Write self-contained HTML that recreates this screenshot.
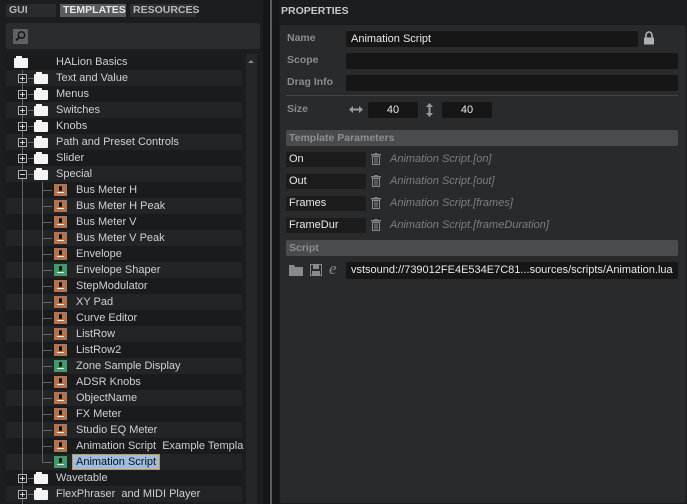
<!DOCTYPE html><html><head><style>
*{margin:0;padding:0;box-sizing:border-box}
body{width:687px;height:504px;overflow:hidden;background:#1c1d1e;font-family:"Liberation Sans",sans-serif;font-size:11px;color:#d0d0d0;position:relative}
.a{position:absolute}
.tab{position:absolute;top:4px;height:13px;font-size:10.5px;font-weight:bold;line-height:13px;padding-left:3px;color:#b8b8b8;background:#2e2f30}
.row{position:absolute;left:6px;width:236px;height:16px;line-height:16px;white-space:nowrap}
.row.o{background:#232425}.row.e{background:#1a1b1c}
.fold{position:absolute;width:14px;height:10px;background:#f4f4f4;top:4px;border-radius:1px}
.fold:before{content:"";position:absolute;left:2px;top:-2px;width:6px;height:2px;background:#f4f4f4}
.exp{position:absolute;width:9px;height:9px;border:1px solid #b0b0b0;top:4px;left:12px;background:#1c1c1c;z-index:2}
.exp:before{content:"";position:absolute;left:1px;top:3px;width:5px;height:1px;background:#ddd}
.exp.p:after{content:"";position:absolute;left:3px;top:1px;width:1px;height:5px;background:#ddd}
.ic{position:absolute;left:48px;top:2px;width:13px;height:12px;background:#b4734a}
.ic.g{background:#3f9b6c}
.ic:before{content:"";position:absolute;left:5px;top:2px;width:3px;height:5px;background:#111;border-radius:1px}
.ic:after{content:"";position:absolute;left:3px;top:8px;width:7px;height:1px;background:#eee}
.t1{position:absolute;left:50px}.t2{position:absolute;left:70px}
.hl{position:absolute;left:22px;width:14px;height:1px;background:#666;top:8px}
.vl{z-index:1}
.lbl{position:absolute;left:287px;color:#8c8c8c;font-weight:bold;font-size:10.5px}
.box{position:absolute;background:#161616;border-radius:2px;height:16px;line-height:16px;padding-left:5px;color:#e8e8e8}
.hdr{position:absolute;left:286px;width:392px;height:16px;background:#4a4b4c;border-radius:2px;color:#8e8e8e;font-weight:bold;font-size:10.5px;line-height:16px;padding-left:3px}
.pbox{position:absolute;left:286px;width:80px;height:15px;background:#1c1c1c;line-height:15px;padding-left:3px;color:#e8e8e8}
.it{position:absolute;left:390px;font-style:italic;color:#7e7e7e}
.tr{position:absolute;left:371px;width:10px;height:12px}
</style></head><body>
<div class="tab" style="left:6px;width:50px;background:#2a2b2c">GUI</div>
<div class="tab" style="left:60px;width:66px;background:#5a5b5c;color:#e8e8e8">TEMPLATES</div>
<div class="tab" style="left:130px;width:66px">RESOURCES</div>
<div class="a" style="left:6px;top:23px;width:254px;height:26px;background:#2b2c2d;border-radius:2px"></div>
<div class="a" style="left:13px;top:29px;width:15px;height:15px;background:#606162;border-radius:1px"><svg width="15" height="15"><circle cx="8.5" cy="6" r="3.2" fill="none" stroke="#111" stroke-width="1.3"/><line x1="6" y1="8.5" x2="3" y2="11.5" stroke="#111" stroke-width="1.6"/></svg></div>
<div class="a" style="left:246px;top:54px;width:11px;height:450px;background:#252627"></div>
<div class="a" style="left:248px;top:60px;width:0;height:0;border-left:3px solid transparent;border-right:3px solid transparent;border-bottom:3px solid #888"></div>
<div class="a" style="left:263px;top:0;width:7px;height:504px;background:#151617"></div>
<div class="a" style="left:270px;top:0;width:2px;height:504px;background:#5c5c5c"></div>
<div class="a" style="left:272px;top:0;width:7px;height:504px;background:#151617"></div>
<div id="tree"></div>
<div class="a vl" style="left:22px;top:70px;width:1px;height:434px;background:#666"></div>
<div class="a vl" style="left:42px;top:182px;width:1px;height:280px;background:#666"></div>
<div class="a" style="left:281px;top:5px;font-size:10.5px;font-weight:bold;color:#c8c8c8">PROPERTIES</div>
<div class="a" style="left:279px;top:24px;width:408px;height:480px;background:#292a2b;border:1px solid #1a1a1a;border-radius:3px"></div>
<div class="lbl" style="top:32px">Name</div><div class="box" style="left:346px;top:31px;width:292px">Animation Script</div>
<svg class="a" style="left:643px;top:31px" width="12" height="14"><path d="M3 7V4a3 3 0 0 1 6 0v3" fill="none" stroke="#b0b0b0" stroke-width="1.6"/><rect x="1" y="6.5" width="10" height="7" fill="#b0b0b0"/></svg>
<div class="lbl" style="top:54px">Scope</div><div class="box" style="left:346px;top:53px;width:332px"></div>
<div class="lbl" style="top:76px">Drag Info</div><div class="box" style="left:346px;top:75px;width:332px"></div>
<div class="a" style="left:286px;top:95px;width:392px;height:1px;background:#444"></div>
<div class="lbl" style="top:103px">Size</div>
<svg class="a" style="left:349px;top:105px" width="14" height="9"><path d="M0 4.5L4 1v7zM14 4.5L10 1v7z" fill="#9a9a9a"/><rect x="3" y="3.5" width="8" height="2" fill="#9a9a9a"/></svg>
<div class="box" style="left:368px;top:102px;width:50px;text-align:center;padding:0">40</div>
<svg class="a" style="left:425px;top:103px" width="9" height="14"><path d="M4.5 0L1 4h7zM4.5 14L1 10h7z" fill="#9a9a9a"/><rect x="3.5" y="3" width="2" height="8" fill="#9a9a9a"/></svg>
<div class="box" style="left:442px;top:102px;width:50px;text-align:center;padding:0">40</div>
<div class="hdr" style="top:130px">Template Parameters</div>
<div id="params"></div>
<div class="hdr" style="top:240px">Script</div>
<svg class="a" style="left:289px;top:264px" width="14" height="12"><path d="M0 1h5l1 2h8v9H0z" fill="#8a8a8a"/></svg>
<svg class="a" style="left:310px;top:264px" width="12" height="12"><rect x="0.5" y="0.5" width="11" height="11" fill="none" stroke="#8a8a8a"/><rect x="3" y="1" width="6" height="4" fill="#8a8a8a"/><rect x="2" y="7" width="8" height="4" fill="#8a8a8a"/></svg>
<div class="a" style="left:329px;top:259px;font-family:'Liberation Serif',serif;font-style:italic;font-size:17px;color:#8a8a8a">e</div>
<div class="box" style="left:346px;top:262px;width:332px;height:17px;line-height:17px">vstsound://739012FE4E534E7C81...sources/scripts/Animation.lua</div>
<script>
var rows=[[0,'HALion Basics'],[1,'Text and Value'],[1,'Menus'],[1,'Switches'],[1,'Knobs'],[1,'Path and Preset Controls'],[1,'Slider'],[2,'Special'],
[3,'Bus Meter H'],[3,'Bus Meter H Peak'],[3,'Bus Meter V'],[3,'Bus Meter V Peak'],[3,'Envelope'],[4,'Envelope Shaper'],[3,'StepModulator'],[3,'XY Pad'],[3,'Curve Editor'],[3,'ListRow'],[3,'ListRow2'],[4,'Zone Sample Display'],[3,'ADSR Knobs'],[3,'ObjectName'],[3,'FX Meter'],[3,'Studio EQ Meter'],[3,'Animation Script\u00a0 Example Templa'],[5,'Animation Script'],[1,'Wavetable'],[1,'FlexPhraser\u00a0 and MIDI Player']];
var h='';rows.forEach(function(r,i){var y=54+i*16,k=r[0];h+='<div class="row '+(i%2?'o':'e')+'" style="top:'+y+'px">';
if(k==0)h+='<div class="fold" style="left:8px"></div><span class="t1">'+r[1]+'</span>';
else if(k<=2)h+='<div class="hl" style="width:8px"></div><div class="exp'+(k==1?' p':'')+'"></div><div class="fold" style="left:28px"></div><span class="t1">'+r[1]+'</span>';
else h+='<div class="hl" style="left:36px;width:10px"></div><div class="ic'+(k>=4?' g':'')+'"></div>'+(k==5?'<span class="t2" style="left:66px;top:0;height:16px;padding:0 3px;background:#9bbde3;border:1px solid #c79a3c;color:#111;line-height:14px">'+r[1]+'</span>':'<span class="t2">'+r[1]+'</span>');
h+='</div>';});document.getElementById('tree').innerHTML=h;
var p=[['On','[on]'],['Out','[out]'],['Frames','[frames]'],['FrameDur','[frameDuration]']],q='';
p.forEach(function(a,i){var y=152+i*22;q+='<div class="pbox" style="top:'+y+'px">'+a[0]+'</div><svg class="tr" style="top:'+(y+1)+'px" viewBox="0 0 10 12"><rect x="0" y="1" width="10" height="1.5" fill="#8a8a8a"/><rect x="3.5" y="0" width="3" height="1" fill="#8a8a8a"/><path d="M1.5 3.5h7v8h-7z" fill="none" stroke="#8a8a8a"/><path d="M4 4.5v6M6 4.5v6" stroke="#8a8a8a"/></svg><div class="it" style="top:'+(y+1)+'px">Animation Script.'+a[1]+'</div>';});
document.getElementById('params').innerHTML=q;
</script>
</body></html>
